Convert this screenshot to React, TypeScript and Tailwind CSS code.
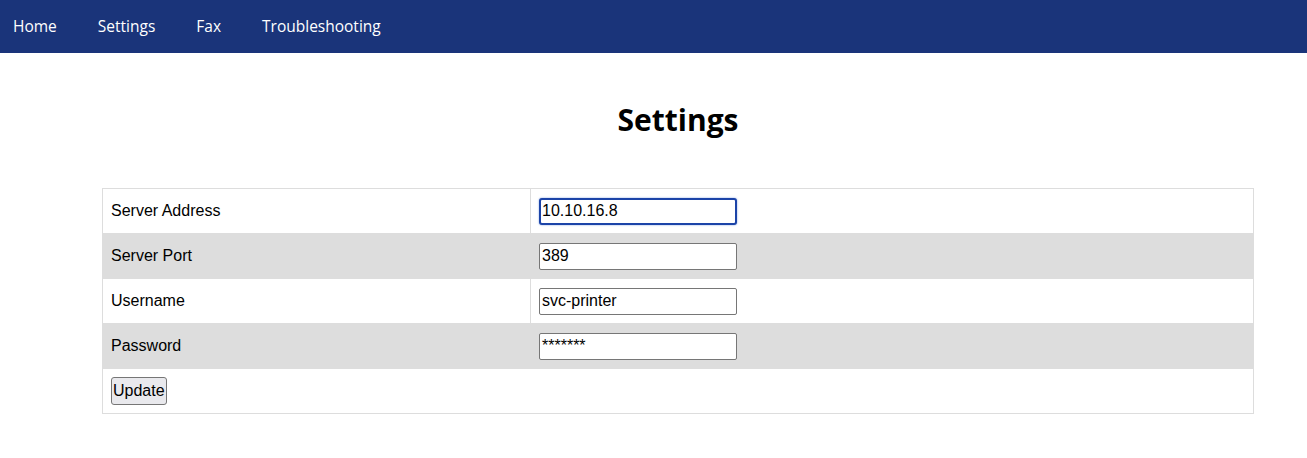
import React from 'react';

const rows = [
  { label: 'Server Address', value: '10.10.16.8', focused: true },
  { label: 'Server Port', value: '389' },
  { label: 'Username', value: 'svc-printer' },
  { label: 'Password', value: '*******' },
];

export default function App() {
  return (
    <div className="min-h-[458px] bg-white">
      {/* Top nav */}
      <nav className="h-[53px] bg-[#1a347a] flex items-center pl-[13px] gap-[41px] font-['Open_Sans',sans-serif] text-[15.5px] text-white">
        <span>Home</span>
        <span>Settings</span>
        <span>Fax</span>
        <span>Troubleshooting</span>
      </nav>

      <div className="ml-[102px] w-[1152px]">
        <h1 className="text-center font-['Open_Sans',sans-serif] font-bold text-[30px] text-black pt-[40px] pb-[41px] leading-[54px]">
          Settings
        </h1>

        {/* Settings table */}
        <div className="border border-[#dddddd] font-['Liberation_Sans',Arial,sans-serif] text-[16px] text-black">
          {rows.map((row, i) => (
            <div
              key={row.label}
              className={`flex ${i % 2 === 1 ? 'bg-[#dddddd] h-[46px]' : 'bg-white h-[44px]'}`}
            >
              <div className="w-[428px] flex items-center pl-[8px] border-r border-[#dddddd]">
                {row.label}
              </div>
              <div className="flex items-center pl-[8px]">
                {row.focused ? (
                  <div className="w-[198px] h-[27px] rounded-[3px] border-2 border-[#1c44a8] shadow-[0_0_2px_#7a9be0] flex items-center px-[1px] bg-white">
                    {row.value}
                  </div>
                ) : (
                  <div
                    className={`w-[198px] h-[27px] rounded-[2px] border border-[#767676] flex px-[2px] bg-white ${
                      row.label === 'Password' ? 'items-start' : 'items-center'
                    }`}
                  >
                    {row.value}
                  </div>
                )}
              </div>
            </div>
          ))}
          <div className="h-[44px] flex items-center pl-[8px]">
            <button className="h-[28px] px-[1px] rounded-[3px] border border-[#767676] bg-[#e9e9ed] text-[16px] leading-none">
              Update
            </button>
          </div>
        </div>
      </div>
    </div>
  );
}
